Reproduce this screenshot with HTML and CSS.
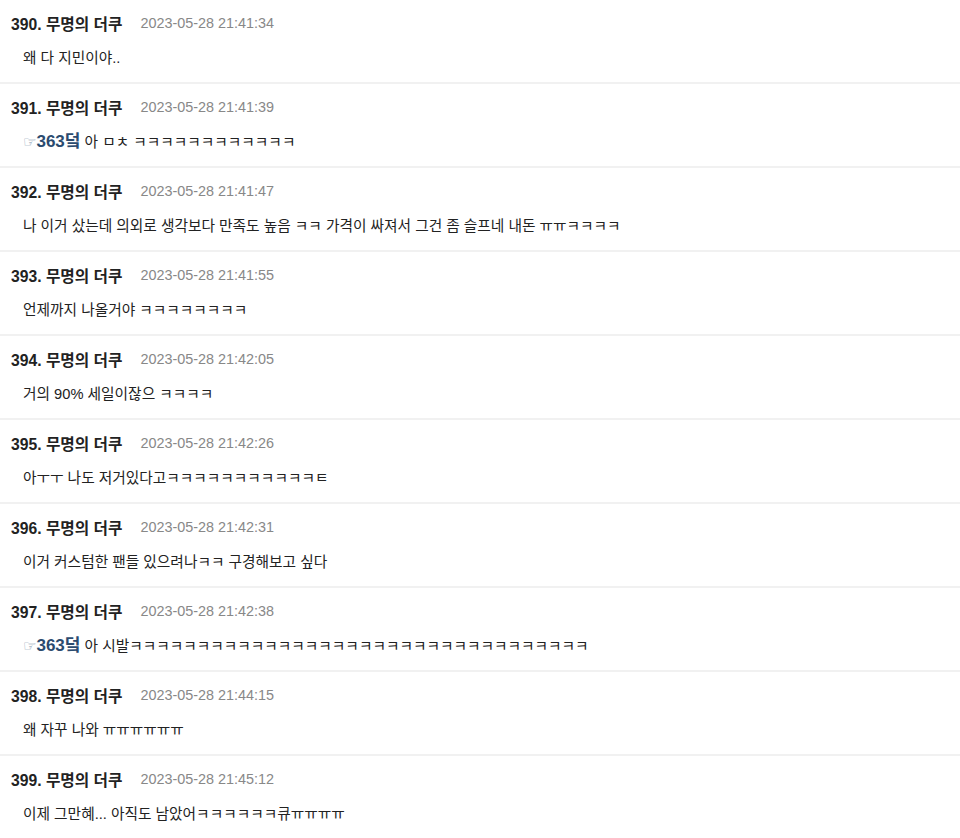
FILE: index.html
```html
<!DOCTYPE html>
<html lang="ko">

<head>
    <meta charset="UTF-8">
    <meta name="viewport" content="width=device-width, initial-scale=1.0">
    <title>댓글</title>
    <link rel="stylesheet" href="styles.css">
</head>

<body>
    <ul class="cmt_list">
        <li>
            <div class="cmt_head"><span class="nick">390. 무명의 더쿠</span><span class="date">2023-05-28 21:41:34</span></div>
            <p class="cmt_body">왜 다 지민이야..</p>
        </li>
        <li>
            <div class="cmt_head"><span class="nick">391. 무명의 더쿠</span><span class="date">2023-05-28 21:41:39</span></div>
            <p class="cmt_body"><a href="#" class="reply"><i>☞</i>363덬</a> 아 ㅁㅊ ㅋㅋㅋㅋㅋㅋㅋㅋㅋㅋㅋㅋ</p>
        </li>
        <li>
            <div class="cmt_head"><span class="nick">392. 무명의 더쿠</span><span class="date">2023-05-28 21:41:47</span></div>
            <p class="cmt_body">나 이거 샀는데 의외로 생각보다 만족도 높음 ㅋㅋ 가격이 싸져서 그건 좀 슬프네 내돈 ㅠㅠㅋㅋㅋㅋ</p>
        </li>
        <li>
            <div class="cmt_head"><span class="nick">393. 무명의 더쿠</span><span class="date">2023-05-28 21:41:55</span></div>
            <p class="cmt_body">언제까지 나올거야 ㅋㅋㅋㅋㅋㅋㅋㅋ</p>
        </li>
        <li>
            <div class="cmt_head"><span class="nick">394. 무명의 더쿠</span><span class="date">2023-05-28 21:42:05</span></div>
            <p class="cmt_body">거의 90% 세일이잖으 ㅋㅋㅋㅋ</p>
        </li>
        <li>
            <div class="cmt_head"><span class="nick">395. 무명의 더쿠</span><span class="date">2023-05-28 21:42:26</span></div>
            <p class="cmt_body">아ㅜㅜ 나도 저거있다고ㅋㅋㅋㅋㅋㅋㅋㅋㅋㅋㅋㅌ</p>
        </li>
        <li>
            <div class="cmt_head"><span class="nick">396. 무명의 더쿠</span><span class="date">2023-05-28 21:42:31</span></div>
            <p class="cmt_body">이거 커스텀한 팬들 있으려나ㅋㅋ 구경해보고 싶다</p>
        </li>
        <li>
            <div class="cmt_head"><span class="nick">397. 무명의 더쿠</span><span class="date">2023-05-28 21:42:38</span></div>
            <p class="cmt_body"><a href="#" class="reply"><i>☞</i>363덬</a> 아 시발ㅋㅋㅋㅋㅋㅋㅋㅋㅋㅋㅋㅋㅋㅋㅋㅋㅋㅋㅋㅋㅋㅋㅋㅋㅋㅋㅋㅋㅋㅋㅋㅋㅋㅋ</p>
        </li>
        <li>
            <div class="cmt_head"><span class="nick">398. 무명의 더쿠</span><span class="date">2023-05-28 21:44:15</span></div>
            <p class="cmt_body">왜 자꾸 나와 ㅠㅠㅠㅠㅠㅠ</p>
        </li>
        <li>
            <div class="cmt_head"><span class="nick">399. 무명의 더쿠</span><span class="date">2023-05-28 21:45:12</span></div>
            <p class="cmt_body">이제 그만혜... 아직도 남았어ㅋㅋㅋㅋㅋㅋ큐ㅠㅠㅠㅠ</p>
        </li>
    </ul>
</body>

</html>
```

FILE: styles.css
```css
body {
    margin: 0;
    background: #fff;
    font-family: "Liberation Sans", "Noto Sans CJK KR", sans-serif;
    color: #222;
}

/* 댓글 목록 */
.cmt_list {
    list-style: none;
    padding: 0;
    margin: 0;
}

.cmt_list>li {
    padding: 13px 0 14px 11px;
    border-bottom: 2px solid #f1f1f1;
}

.cmt_head {
    display: flex;
    align-items: center;
    height: 20px;
}

.nick {
    font-size: 15.7px;
    font-weight: bold;
    color: #222;
}

.date {
    margin-left: 18px;
    font-size: 14.4px;
    color: #888;
}

.cmt_body {
    margin: 15px 0 0 12px;
    height: 20px;
    line-height: 20px;
    font-size: 14.7px;
    color: #222;
}

/* 답글 대상 */
.reply {
    font-size: 17px;
    font-weight: bold;
    color: #2b4b6f;
    text-decoration: none;
}

.reply i {
    font-style: normal;
    font-weight: normal;
    font-size: 15px;
    color: #8296ad;
    font-family: "DejaVu Sans", sans-serif;
}
```
